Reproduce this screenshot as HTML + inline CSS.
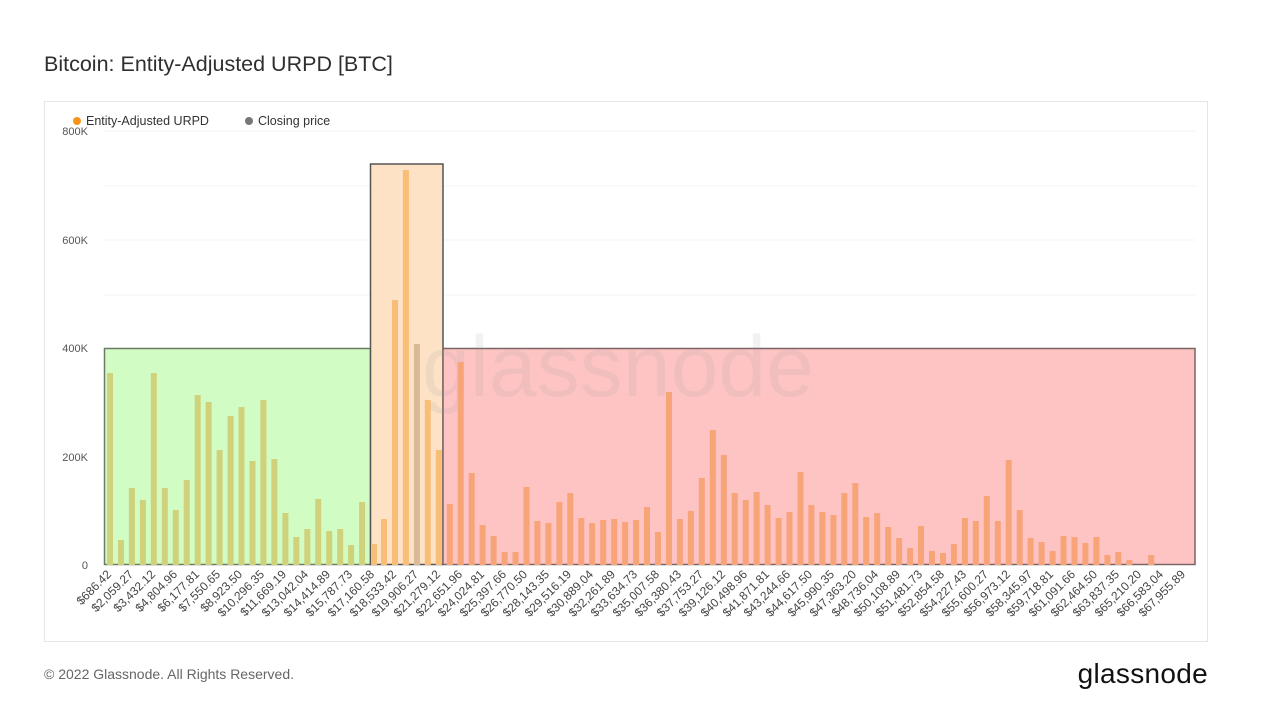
<!DOCTYPE html>
<html><head><meta charset="utf-8"><style>
body{margin:0;background:#fff;width:1287px;height:721px;overflow:hidden;font-family:"Liberation Sans",sans-serif;}
</style></head><body>
<svg width="1287" height="721" viewBox="0 0 1287 721" xmlns="http://www.w3.org/2000/svg" font-family="Liberation Sans, sans-serif">
<text x="44" y="71" font-size="21.5" fill="#2f2f2f">Bitcoin: Entity-Adjusted URPD [BTC]</text>
<rect x="44.5" y="101.5" width="1163" height="540" fill="#fff" stroke="#e6e6e6"/>
<circle cx="77" cy="121" r="4" fill="#f7931a"/>
<text x="86" y="125" font-size="12.5" fill="#333">Entity-Adjusted URPD</text>
<circle cx="249" cy="121" r="4" fill="#777"/>
<text x="258" y="125" font-size="12.5" fill="#333">Closing price</text>
<g stroke="#f3f3f3"><line x1="104" x2="1195" y1="131" y2="131"/><line x1="104" x2="1195" y1="186" y2="186"/><line x1="104" x2="1195" y1="240" y2="240"/><line x1="104" x2="1195" y1="295" y2="295"/></g>
<g font-size="11" fill="#555" text-anchor="end"><text x="88" y="135">800K</text><text x="88" y="244">600K</text><text x="88" y="352">400K</text><text x="88" y="461">200K</text><text x="88" y="569">0</text></g>
<rect x="104.5" y="348.5" width="266" height="216" fill="#d1fcc3" stroke="#6f7a66" stroke-width="1.5"/>
<rect x="370.5" y="164" width="72.5" height="400.5" fill="#fde2c6" stroke="#555" stroke-width="1.5"/>
<rect x="443" y="348.5" width="752" height="216" fill="#fec4c4" stroke="#7a6464" stroke-width="1.5"/>
<text x="422" y="396" font-size="86" fill="#999" opacity="0.12" letter-spacing="0">glassnode</text>
<g fill="#cfd27b">
<rect x="107" y="373" width="6" height="192"/><rect x="118" y="540" width="6" height="25"/><rect x="128.9" y="488" width="6" height="77"/><rect x="139.9" y="500" width="6" height="65"/><rect x="150.8" y="373" width="6" height="192"/><rect x="161.8" y="488" width="6" height="77"/><rect x="172.8" y="510" width="6" height="55"/><rect x="183.7" y="480" width="6" height="85"/><rect x="194.7" y="395" width="6" height="170"/><rect x="205.6" y="402" width="6" height="163"/><rect x="216.6" y="450" width="6" height="115"/><rect x="227.6" y="416" width="6" height="149"/><rect x="238.5" y="407" width="6" height="158"/><rect x="249.5" y="461" width="6" height="104"/><rect x="260.4" y="400" width="6" height="165"/><rect x="271.4" y="459" width="6" height="106"/><rect x="282.4" y="513" width="6" height="52"/><rect x="293.3" y="537" width="6" height="28"/><rect x="304.3" y="529" width="6" height="36"/><rect x="315.2" y="499" width="6" height="66"/><rect x="326.2" y="531" width="6" height="34"/><rect x="337.2" y="529" width="6" height="36"/><rect x="348.1" y="545" width="6" height="20"/><rect x="359.1" y="502" width="6" height="63"/>
</g>
<g fill="#f8bd76">
<rect x="371" y="544" width="6" height="21"/><rect x="381" y="519" width="6" height="46"/><rect x="392" y="300" width="6" height="265"/><rect x="402.9" y="170" width="6" height="395"/><rect x="413.9" y="344" width="6" height="221" fill="#d9b996"/><rect x="424.8" y="400" width="6" height="165"/><rect x="435.8" y="450" width="6" height="115"/>
</g>
<g fill="#f7a479">
<rect x="446.8" y="504" width="6" height="61"/><rect x="457.7" y="362" width="6" height="203"/><rect x="468.7" y="473" width="6" height="92"/><rect x="479.6" y="525" width="6" height="40"/><rect x="490.6" y="536" width="6" height="29"/><rect x="501.6" y="552" width="6" height="13"/><rect x="512.5" y="552" width="6" height="13"/><rect x="523.5" y="487" width="6" height="78"/><rect x="534.4" y="521" width="6" height="44"/><rect x="545.4" y="523" width="6" height="42"/><rect x="556.4" y="502" width="6" height="63"/><rect x="567.3" y="493" width="6" height="72"/><rect x="578.3" y="518" width="6" height="47"/><rect x="589.2" y="523" width="6" height="42"/><rect x="600.2" y="520" width="6" height="45"/><rect x="611.2" y="519" width="6" height="46"/><rect x="622.1" y="522" width="6" height="43"/><rect x="633.1" y="520" width="6" height="45"/><rect x="644" y="507" width="6" height="58"/><rect x="655" y="532" width="6" height="33"/><rect x="666" y="392" width="6" height="173"/><rect x="676.9" y="519" width="6" height="46"/><rect x="687.9" y="511" width="6" height="54"/><rect x="698.8" y="478" width="6" height="87"/><rect x="709.8" y="430" width="6" height="135"/><rect x="720.8" y="455" width="6" height="110"/><rect x="731.7" y="493" width="6" height="72"/><rect x="742.7" y="500" width="6" height="65"/><rect x="753.6" y="492" width="6" height="73"/><rect x="764.6" y="505" width="6" height="60"/><rect x="775.6" y="518" width="6" height="47"/><rect x="786.5" y="512" width="6" height="53"/><rect x="797.5" y="472" width="6" height="93"/><rect x="808.4" y="505" width="6" height="60"/>
<rect x="819.4" y="512" width="6" height="53"/><rect x="830.4" y="515" width="6" height="50"/><rect x="841.3" y="493" width="6" height="72"/><rect x="852.3" y="483" width="6" height="82"/><rect x="863.2" y="517" width="6" height="48"/><rect x="874.2" y="513" width="6" height="52"/><rect x="885.2" y="527" width="6" height="38"/><rect x="896.1" y="538" width="6" height="27"/><rect x="907.1" y="548" width="6" height="17"/><rect x="918" y="526" width="6" height="39"/><rect x="929" y="551" width="6" height="14"/><rect x="940" y="553" width="6" height="12"/><rect x="950.9" y="544" width="6" height="21"/><rect x="961.9" y="518" width="6" height="47"/><rect x="972.8" y="521" width="6" height="44"/><rect x="983.8" y="496" width="6" height="69"/><rect x="994.8" y="521" width="6" height="44"/><rect x="1005.7" y="460" width="6" height="105"/><rect x="1016.7" y="510" width="6" height="55"/><rect x="1027.6" y="538" width="6" height="27"/><rect x="1038.6" y="542" width="6" height="23"/><rect x="1049.6" y="551" width="6" height="14"/><rect x="1060.5" y="536" width="6" height="29"/><rect x="1071.5" y="537" width="6" height="28"/><rect x="1082.4" y="543" width="6" height="22"/><rect x="1093.4" y="537" width="6" height="28"/><rect x="1104.4" y="555" width="6" height="10"/><rect x="1115.3" y="552" width="6" height="13"/><rect x="1126.3" y="560" width="6" height="5"/><rect x="1148.2" y="555" width="6" height="10"/>
</g>
<g font-size="12" fill="#444" text-anchor="end">
<text transform="translate(112,575) rotate(-45)">$686.42</text>
<text transform="translate(134,575) rotate(-45)">$2,059.27</text>
<text transform="translate(156,575) rotate(-45)">$3,432.12</text>
<text transform="translate(178,575) rotate(-45)">$4,804.96</text>
<text transform="translate(200,575) rotate(-45)">$6,177.81</text>
<text transform="translate(221,575) rotate(-45)">$7,550.65</text>
<text transform="translate(243,575) rotate(-45)">$8,923.50</text>
<text transform="translate(265,575) rotate(-45)">$10,296.35</text>
<text transform="translate(287,575) rotate(-45)">$11,669.19</text>
<text transform="translate(309,575) rotate(-45)">$13,042.04</text>
<text transform="translate(331,575) rotate(-45)">$14,414.89</text>
<text transform="translate(353,575) rotate(-45)">$15,787.73</text>
<text transform="translate(375,575) rotate(-45)">$17,160.58</text>
<text transform="translate(397,575) rotate(-45)">$18,533.42</text>
<text transform="translate(419,575) rotate(-45)">$19,906.27</text>
<text transform="translate(441,575) rotate(-45)">$21,279.12</text>
<text transform="translate(463,575) rotate(-45)">$22,651.96</text>
<text transform="translate(485,575) rotate(-45)">$24,024.81</text>
<text transform="translate(507,575) rotate(-45)">$25,397.66</text>
<text transform="translate(528,575) rotate(-45)">$26,770.50</text>
<text transform="translate(550,575) rotate(-45)">$28,143.35</text>
<text transform="translate(572,575) rotate(-45)">$29,516.19</text>
<text transform="translate(594,575) rotate(-45)">$30,889.04</text>
<text transform="translate(616,575) rotate(-45)">$32,261.89</text>
<text transform="translate(638,575) rotate(-45)">$33,634.73</text>
<text transform="translate(660,575) rotate(-45)">$35,007.58</text>
<text transform="translate(682,575) rotate(-45)">$36,380.43</text>
<text transform="translate(704,575) rotate(-45)">$37,753.27</text>
<text transform="translate(726,575) rotate(-45)">$39,126.12</text>
<text transform="translate(748,575) rotate(-45)">$40,498.96</text>
<text transform="translate(770,575) rotate(-45)">$41,871.81</text>
<text transform="translate(791,575) rotate(-45)">$43,244.66</text>
<text transform="translate(813,575) rotate(-45)">$44,617.50</text>
<text transform="translate(835,575) rotate(-45)">$45,990.35</text>
<text transform="translate(857,575) rotate(-45)">$47,363.20</text>
<text transform="translate(879,575) rotate(-45)">$48,736.04</text>
<text transform="translate(901,575) rotate(-45)">$50,108.89</text>
<text transform="translate(923,575) rotate(-45)">$51,481.73</text>
<text transform="translate(945,575) rotate(-45)">$52,854.58</text>
<text transform="translate(967,575) rotate(-45)">$54,227.43</text>
<text transform="translate(989,575) rotate(-45)">$55,600.27</text>
<text transform="translate(1011,575) rotate(-45)">$56,973.12</text>
<text transform="translate(1033,575) rotate(-45)">$58,345.97</text>
<text transform="translate(1054,575) rotate(-45)">$59,718.81</text>
<text transform="translate(1076,575) rotate(-45)">$61,091.66</text>
<text transform="translate(1098,575) rotate(-45)">$62,464.50</text>
<text transform="translate(1120,575) rotate(-45)">$63,837.35</text>
<text transform="translate(1142,575) rotate(-45)">$65,210.20</text>
<text transform="translate(1164,575) rotate(-45)">$66,583.04</text>
<text transform="translate(1186,575) rotate(-45)">$67,955.89</text>
</g>
<text x="44" y="679" font-size="14" fill="#666">© 2022 Glassnode. All Rights Reserved.</text>
<text x="1208" y="683" font-size="28" fill="#111" text-anchor="end" letter-spacing="0.3">glassnode</text>
</svg>
</body></html>
